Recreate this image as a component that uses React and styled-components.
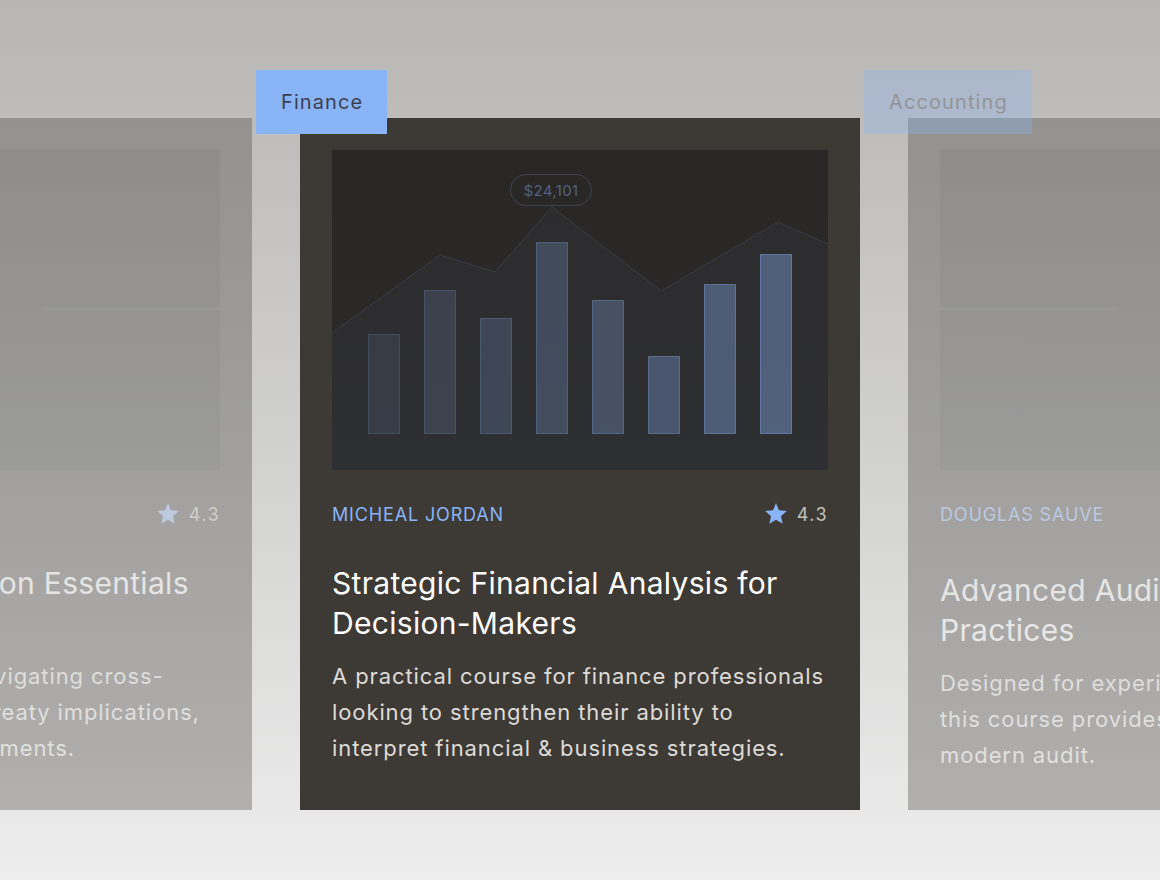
import React from 'react';
import styled, { createGlobalStyle } from 'styled-components';

const GlobalStyle = createGlobalStyle`
  html, body {
    margin: 0;
    padding: 0;
  }
  body {
    width: 1160px;
    height: 880px;
    overflow: hidden;
    background: linear-gradient(180deg, #b8b6b3 0%, #d1d1d0 52%, #ededed 100%);
    font-family: Inter, "Noto Sans", sans-serif;
  }
`;

const courses = [
    {
        id: 'tax',
        tag: 'Accounting',
        author: 'ANNA KOWALSKI',
        rating: '4.3',
        title: 'International Taxation Essentials',
        lines: [
            'Made for all advisors navigating cross-',
            'border structuring and treaty implications,',
            'and international requirements.',
        ],
        art: 'left',
        dim: true,
    },
    {
        id: 'finance',
        tag: 'Finance',
        author: 'MICHEAL JORDAN',
        rating: '4.3',
        title: 'Strategic Financial Analysis for Decision-Makers',
        lines: [
            'A practical course for finance professionals',
            'looking to strengthen their ability to',
            'interpret financial & business strategies.',
        ],
        art: 'chart',
    },
    {
        id: 'audit',
        tag: 'Accounting',
        author: 'DOUGLAS SAUVE',
        rating: '4.6',
        title: 'Advanced Auditing Standards and Practices',
        lines: [
            'Designed for experienced accountants,',
            'this course provides a deep look at the',
            'modern audit.',
        ],
        art: 'right',
        dim: true,
        shift: 7,
    },
];

const bars = [
    { x: 36, h: 100 },
    { x: 92, h: 144 },
    { x: 148, h: 116 },
    { x: 204, h: 192 },
    { x: 260, h: 134 },
    { x: 316, h: 78 },
    { x: 372, h: 150 },
    { x: 428, h: 180 },
];

const linePoints = '0,183 108,105 163,122 220,57 329,141 446,72 496,94';

const Chart = () => (
    <svg width="496" height="320" viewBox="0 0 496 320">
        <polygon points={`${linePoints} 496,320 0,320`} fill="rgba(138,180,248,0.035)" />
        <polyline points={linePoints} fill="none" stroke="rgba(138,180,248,0.14)" strokeWidth="1" />
        {bars.map((b, i) => {
            const op = 0.11 + i * 0.039;
            return (
                <rect
                    key={b.x}
                    x={b.x + 0.5}
                    y={284 - b.h + 0.5}
                    width="31"
                    height={b.h - 1}
                    fill={`rgba(138,180,248,${op})`}
                    stroke={`rgba(138,180,248,${op + 0.08})`}
                    strokeWidth="1"
                />
            );
        })}
    </svg>
);

const GridLine = ({side}) => (
    <svg width="496" height="320" viewBox="0 0 496 320">
        <rect
            x={side === 'left' ? 320 : 0}
            y="158"
            width="176"
            height="2"
            fill="rgba(138,180,248,0.12)"
        />
    </svg>
);

const Star = () => (
    <svg width="26" height="26" viewBox="0 0 24 24">
        <path
            fill="#8ab4f8"
            d="M12 17.27L18.18 21l-1.64-7.03L22 9.24l-7.19-.61L12 2 9.19 8.63 2 9.24l5.46 4.73L5.82 21z"
        />
    </svg>
);

const CourseCard = ({course}) => (
    <Slot>
        <Tag $dim={course.dim}>{course.tag}</Tag>
        <Card $dim={course.dim}>
            <Picture>
                {course.art === 'chart' ? <Chart /> : <GridLine side={course.art} />}
                {course.art === 'chart' && <Price>$24,101</Price>}
            </Picture>
            <Meta>
                <Author>{course.author}</Author>
                <Rating>
                    <Star />
                    <span>{course.rating}</span>
                </Rating>
            </Meta>
            <Title $shift={course.shift || 0}>{course.title}</Title>
            <Description>
                {course.lines.map((line, i) => (
                    <React.Fragment key={i}>
                        {line}
                        {i < course.lines.length - 1 && <br />}
                    </React.Fragment>
                ))}
            </Description>
        </Card>
    </Slot>
);

export default function App() {
    return (
        <>
            <GlobalStyle />
            <Carousel>
                {courses.map(course => <CourseCard key={course.id} course={course} />)}
            </Carousel>
        </>
    );
}

const Carousel = styled.div`
    width: 1160px;
    height: 880px;
    overflow: hidden;
    display: flex;
    flex-flow: row nowrap;
    justify-content: center;
    align-items: flex-start;
    gap: 48px;
    padding-top: 118px;
    box-sizing: border-box;
`;

const Slot = styled.div`
    position: relative;
    flex: 0 0 560px;
`;

const Tag = styled.div`
    position: absolute;
    top: -48px;
    left: -44px;
    z-index: 1;
    height: 64px;
    padding: 0 24px 0 25px;
    display: flex;
    align-items: center;
    background: #8ab4f8;
    color: #3c4150;
    font-size: 20px;
    letter-spacing: 1.1px;
    opacity: ${props => (props.$dim ? 0.32 : 1)};
`;

const Card = styled.div`
    width: 560px;
    height: 692px;
    box-sizing: border-box;
    padding: 32px;
    background: #3d3a36;
    opacity: ${props => (props.$dim ? 0.32 : 1)};
`;

const Picture = styled.div`
    position: relative;
    width: 496px;
    height: 320px;
    background: linear-gradient(180deg, #292725 0%, #2b2b2b 100%);

    svg {
        display: block;
    }
`;

const Price = styled.div`
    position: absolute;
    left: 178px;
    top: 24px;
    width: 82px;
    height: 32px;
    box-sizing: border-box;
    border: 1px solid rgba(138, 180, 248, 0.2);
    border-radius: 16px;
    display: flex;
    align-items: center;
    justify-content: center;
    font-size: 15px;
    letter-spacing: 0.4px;
    color: rgba(138, 180, 248, 0.42);
`;

const Meta = styled.div`
    margin-top: 32px;
    height: 24px;
    display: flex;
    align-items: center;
    justify-content: space-between;
`;

const Author = styled.span`
    font-size: 18px;
    letter-spacing: 0.85px;
    color: #8ab4f8;
`;

const Rating = styled.span`
    display: flex;
    align-items: center;
    gap: 8px;
    font-size: 18px;
    letter-spacing: 1.5px;
    color: #c2c0bc;
`;

const Title = styled.h2`
    margin: ${props => 37 + props.$shift}px 0 0;
    min-height: 80px;
    font-size: 30px;
    font-weight: 400;
    line-height: 40px;
    letter-spacing: 0.3px;
    color: #ffffff;
`;

const Description = styled.p`
    margin: 15px 0 0;
    font-size: 22px;
    line-height: 36px;
    letter-spacing: 0.9px;
    color: #dddbd7;
`;
